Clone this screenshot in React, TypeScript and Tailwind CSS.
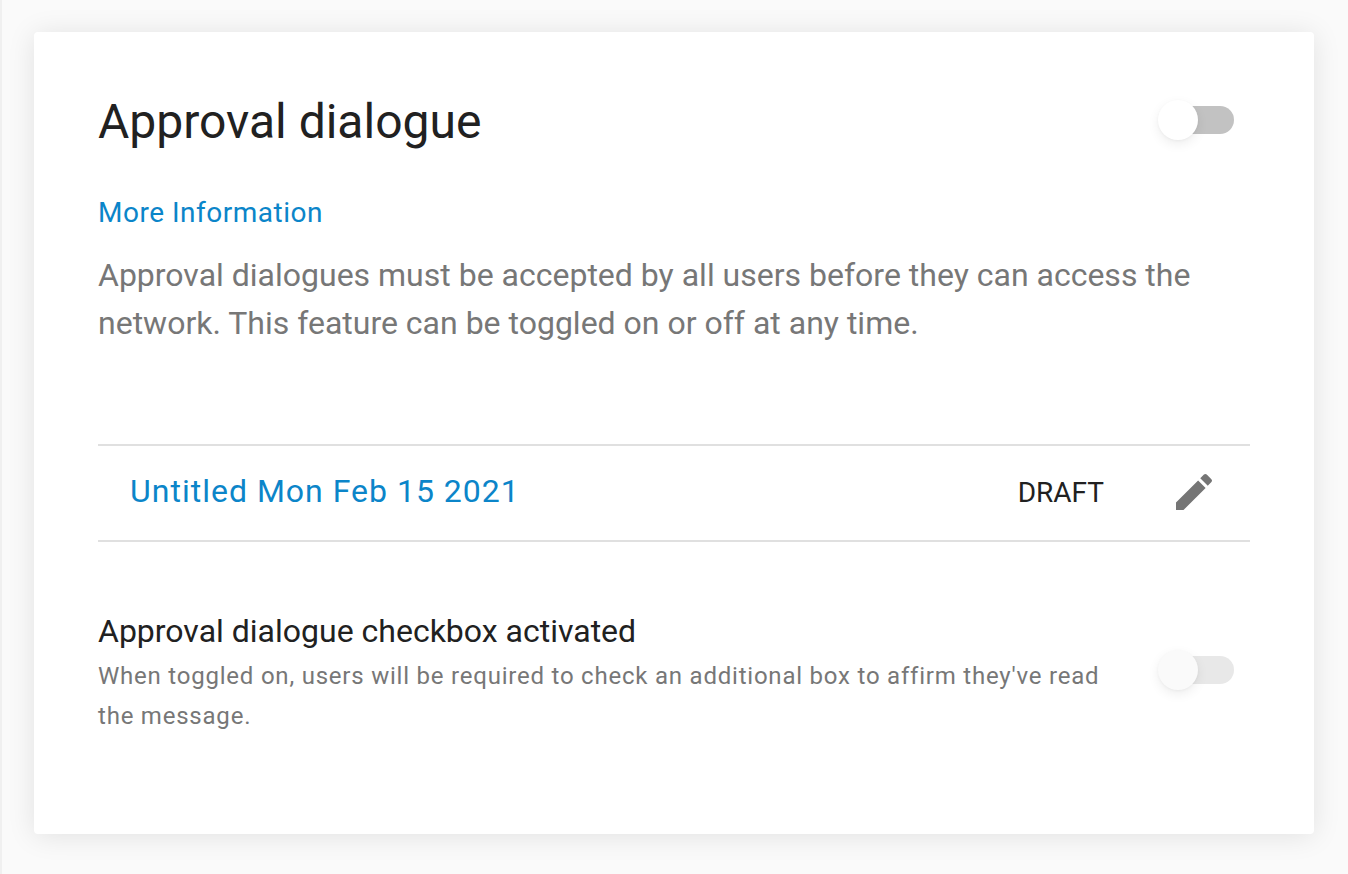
import React from 'react';

const Toggle = ({ disabled }: { disabled?: boolean }) => (
  <div className="relative w-[76px] h-[40px] shrink-0">
    <div className={`absolute left-[20px] top-[6px] w-[56px] h-[28px] rounded-full ${disabled ? 'bg-[#e8e8e8]' : 'bg-[#c2c2c2]'}`} />
    <div
      className={`absolute left-0 top-0 w-[40px] h-[40px] rounded-full shadow-[0_4px_12px_rgba(0,0,0,0.07),0_1px_3px_rgba(0,0,0,0.04)] ${disabled ? 'bg-[#fafafa]' : 'bg-white'}`}
    />
  </div>
);

export default function App() {
  return (
    <div className="min-h-[874px] bg-[#fafafa] pt-[32px] pr-[34px] pl-[32px] font-['Roboto',sans-serif] border-l-2 border-[#f0f0f0] box-border">
      <div className="bg-white rounded-[4px] h-[802px] shadow-[0_2px_28px_rgba(0,0,0,0.1)] px-[64px] pt-[60px]">
        <div className="flex items-center justify-between h-[60px] pr-[16px]">
          <h1 className="text-[48px] leading-[60px] text-[#212121] font-normal">Approval dialogue</h1>
          <div className="-mt-[4px]">
            <Toggle />
          </div>
        </div>
        <a className="block mt-[41px] text-[28px] leading-[40px] tracking-[0.5px] text-[#0b85c9]">More Information</a>
        <p className="mt-[18px] text-[32px] leading-[48px] text-[#777777]">
          Approval dialogues must be accepted by all users before they can access the network. This feature can be toggled on or off at any time.
        </p>
        <div className="mt-[97px] h-[98px] border-y-2 border-[#e0e0e0] flex items-center pl-[32px] pr-[32px]">
          <a className="text-[32px] tracking-[1px] text-[#0b85c9] flex-1 -mt-[4px]">Untitled Mon Feb 15 2021</a>
          <span className="text-[28px] text-[#212121] mr-[66px]">DRAFT</span>
          <svg className="-mt-[3px]" width="48" height="48" viewBox="0 0 24 24" fill="#757575">
            <path d="M3 17.25V21h3.75L17.81 9.94l-3.75-3.75L3 17.25zM20.71 7.04a1 1 0 0 0 0-1.41l-2.34-2.34a1 1 0 0 0-1.41 0l-1.83 1.83 3.75 3.75 1.83-1.83z" />
          </svg>
        </div>
        <div className="mt-[67px] flex items-center justify-between pr-[16px]">
          <div className="w-[1030px]">
            <div className="text-[32px] leading-[44px] text-[#212121]">Approval dialogue checkbox activated</div>
            <div className="mt-[3px] text-[24px] leading-[40px] tracking-[0.78px] text-[#777777]">
              When toggled on, users will be required to check an additional box to affirm they've read the message.
            </div>
          </div>
          <div className="-mt-[6px]">
            <Toggle disabled />
          </div>
        </div>
      </div>
    </div>
  );
}
